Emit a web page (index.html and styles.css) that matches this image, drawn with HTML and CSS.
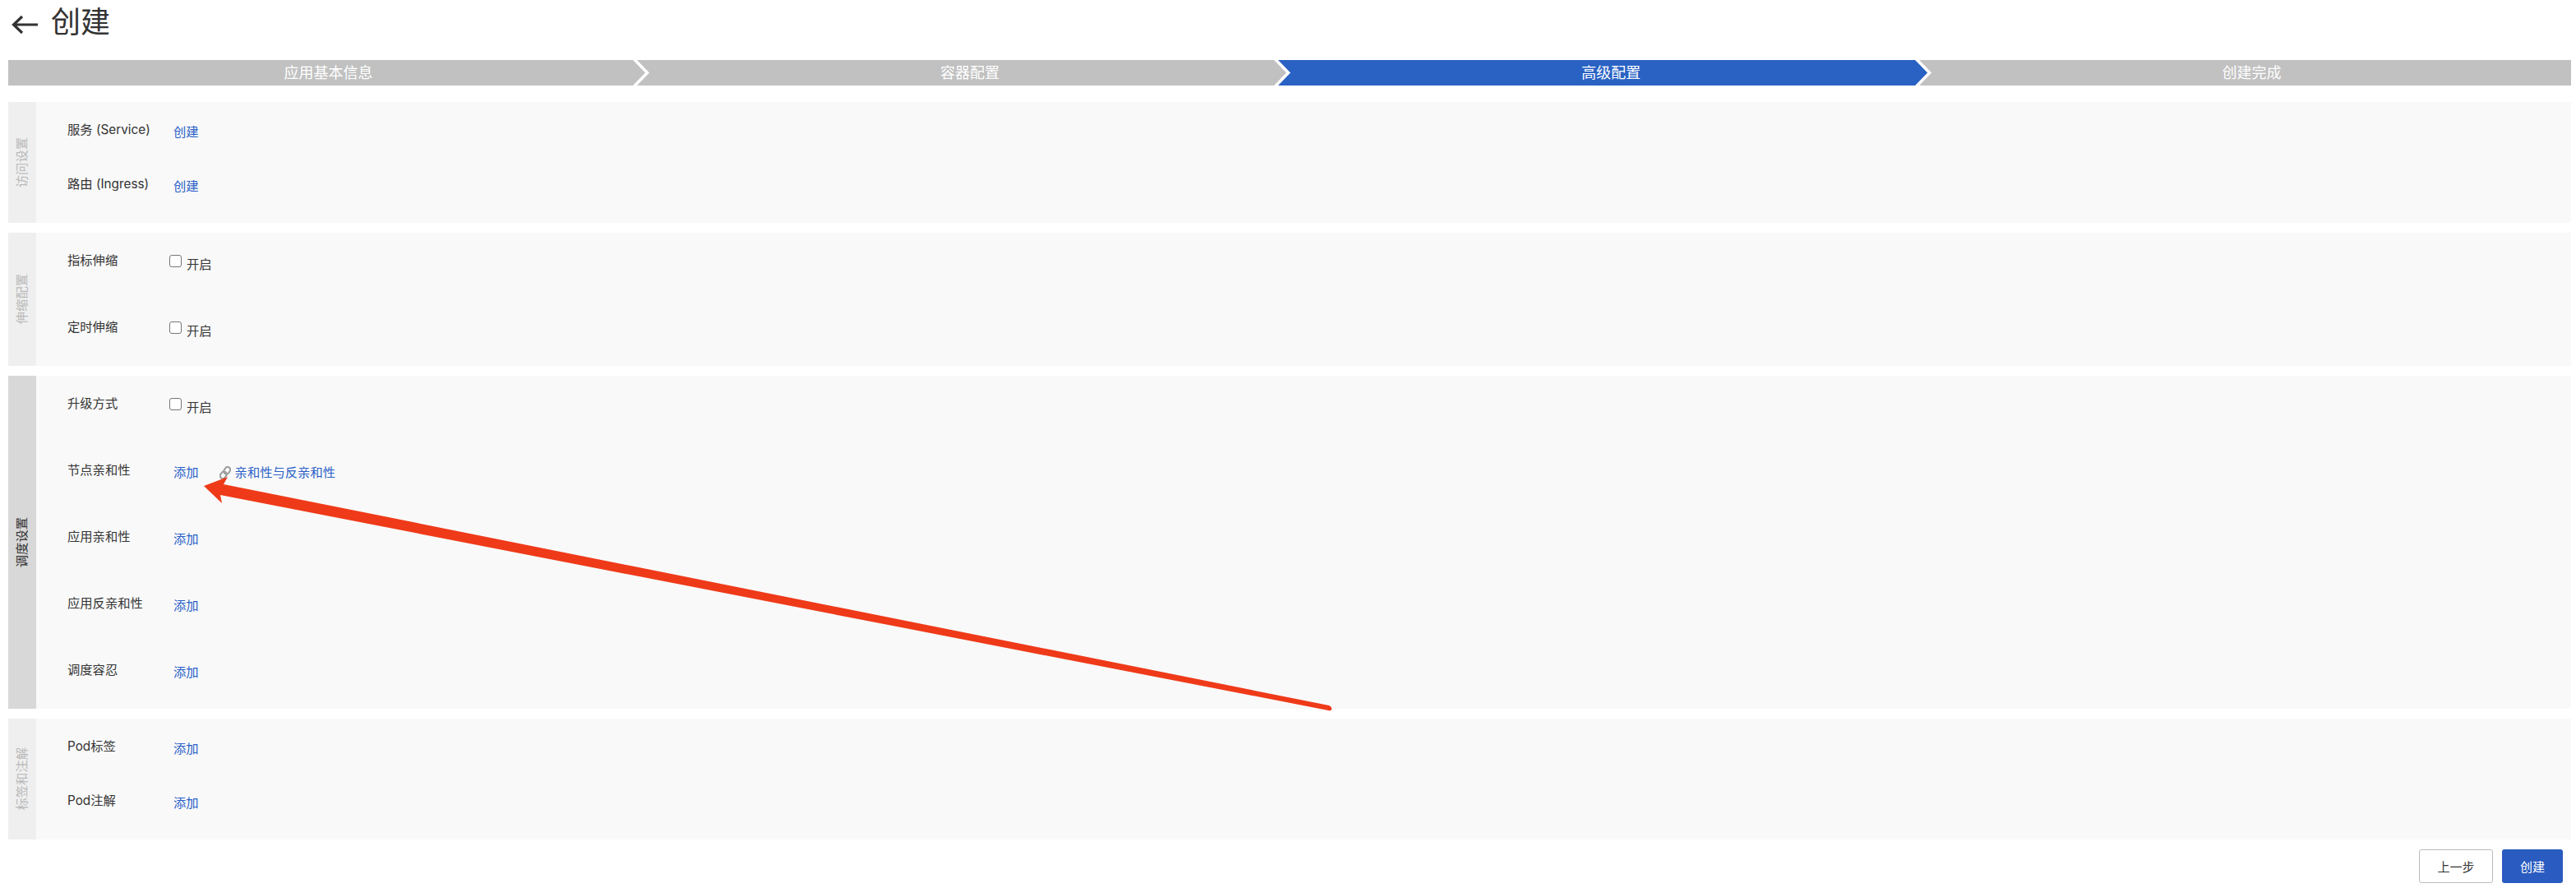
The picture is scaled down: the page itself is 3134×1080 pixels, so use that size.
FILE: index.html
```html
<!DOCTYPE html>
<html lang="zh-CN">
<head>
  <meta charset="UTF-8" />
  <title>创建</title>
  <link rel="stylesheet" href="styles.css">
</head>
<body>

<div class="page-head">
  <svg class="back-icon" viewBox="0 0 33 24" width="33" height="24">
    <path d="M32 12H3M13 2L2.500 12L13 22" fill="none" stroke="#333" stroke-width="3.200"/>
  </svg>
  <h1>创建</h1>
</div>

<div class="steps">
  <div class="step">应用基本信息</div>
  <div class="step">容器配置</div>
  <div class="step active">高级配置</div>
  <div class="step">创建完成</div>
</div>

<div class="section short">
  <div class="side"><span>访问设置</span></div>
  <div class="rows">
    <div class="row"><div class="label">服务 (Service)</div><a class="link">创建</a></div>
    <div class="row"><div class="label">路由 (Ingress)</div><a class="link">创建</a></div>
  </div>
</div>

<div class="section">
  <div class="side"><span>伸缩配置</span></div>
  <div class="rows">
    <div class="row">
      <div class="label">指标伸缩</div>
      <label class="check"><input type="checkbox"><span>开启</span></label>
    </div>
    <div class="row">
      <div class="label">定时伸缩</div>
      <label class="check"><input type="checkbox"><span>开启</span></label>
    </div>
  </div>
</div>

<div class="section">
  <div class="side current"><span>调度设置</span></div>
  <div class="rows">
    <div class="row">
      <div class="label">升级方式</div>
      <label class="check"><input type="checkbox"><span>开启</span></label>
    </div>
    <div class="row">
      <div class="label">节点亲和性</div>
      <a class="link">添加</a>
      <a class="link doc">
        <svg viewBox="0 0 14 16" width="14" height="16">
          <g fill="none" stroke="#9a9a9a" stroke-width="2" transform="rotate(35 7 8)">
            <rect x="4" y="0" width="6.500" height="9" rx="3.200"/>
            <rect x="3.500" y="7" width="6.500" height="9" rx="3.200"/>
          </g>
        </svg>
        亲和性与反亲和性
      </a>
    </div>
    <div class="row"><div class="label">应用亲和性</div><a class="link">添加</a></div>
    <div class="row"><div class="label">应用反亲和性</div><a class="link">添加</a></div>
    <div class="row"><div class="label">调度容忍</div><a class="link">添加</a></div>
  </div>
</div>

<div class="section short">
  <div class="side"><span>标签和注解</span></div>
  <div class="rows">
    <div class="row"><div class="label">Pod标签</div><a class="link">添加</a></div>
    <div class="row"><div class="label">Pod注解</div><a class="link">添加</a></div>
  </div>
</div>

<div class="footer">
  <button class="btn">上一步</button>
  <button class="btn primary">创建</button>
</div>

<!-- red annotation drawn over the page -->
<svg class="annotation" viewBox="0 0 3134 1080" width="3134" height="1080">
  <path d="M248 591L277 580L272 589L1617 858Q1621 860 1620 863Q1619 865 1616 864L268 602L270 612Z" fill="#ef3a19"/>
</svg>

</body>
</html>
```

FILE: styles.css
```css
html, body {
  height: 100%;
}
body {
  margin: 0;
  padding: 0 6px 0 10px;
  position: relative;
  overflow: hidden;
  background: #fff;
  color: #333;
  font-family: Inter, "Noto Sans CJK SC", sans-serif;
  font-size: 15.300px;
}
.page-head {
  display: flex;
  align-items: center;
  height: 54px;
  margin-bottom: 19px;
  padding-left: 4px;
}
.back-icon {
  margin-right: 15px;
  margin-top: 6px;
}
h1 {
  margin: 0;
  font-size: 36px;
  font-weight: 400;
  line-height: 54px;
  color: #333;
}
.steps {
  display: flex;
  height: 31px;
  margin-bottom: 20px;
}
.step {
  flex: 0 0 790px;
  margin-left: -10px;
  padding-left: 20px;
  box-sizing: border-box;
  background: #c1c1c1;
  color: #fff;
  font-size: 18px;
  line-height: 31px;
  text-align: center;
  clip-path: polygon(0 0, calc(100% - 15px) 0, 100% 50%, calc(100% - 15px) 100%, 0 100%, 15px 50%);
}
.step:first-child {
  flex-basis: 775px;
  margin-left: 0;
  padding-left: 4px;
  clip-path: polygon(0 0, calc(100% - 15px) 0, 100% 50%, calc(100% - 15px) 100%, 0 100%);
}
.step:last-child {
  flex: 1;
  padding-left: 16px;
  clip-path: polygon(0 0, 100% 0, 100% 100%, 0 100%, 15px 50%);
}
.step.active {
  background: #2a62c4;
}
.section {
  display: flex;
  margin-bottom: 12px;
  background: #f9f9f9;
}
.side {
  flex: 0 0 34px;
  display: flex;
  align-items: center;
  justify-content: center;
  background: #efefef;
  color: #b9b9b9;
}
.side span {
  writing-mode: vertical-rl;
  text-orientation: sideways;
  transform: rotate(180deg);
  line-height: 18px;
}
.side.current {
  background: #d8d8d8;
  color: #333;
}
.rows {
  display: flex;
  flex-direction: column;
  gap: 59px;
  padding: 23px 0 36px 38px;
}
.short .rows {
  gap: 44px;
}
.row {
  display: flex;
  height: 22px;
  line-height: 22px;
}
.label {
  flex: 0 0 129px;
  color: #333;
}
.link {
  margin-top: 3px;
  color: #2a5fc7;
}
.doc {
  display: flex;
  align-items: center;
  height: 22px;
  margin-left: 25px;
  gap: 5px;
}
.check {
  display: flex;
  margin: 0 0 0 -5px;
}
.check input {
  appearance: none;
  width: 15px;
  height: 15px;
  margin: 4px 6px 0 0;
  border: 1px solid #767676;
  border-radius: 3px;
  background: #fff;
}
.check span {
  margin-top: 5px;
}
.footer {
  display: flex;
  justify-content: flex-end;
  gap: 11px;
  padding-right: 10px;
}
.btn {
  height: 41px;
  width: 90px;
  border: 1px solid #bbb;
  border-radius: 3px;
  background: #fff;
  color: #333;
  font-family: inherit;
  font-size: 15px;
}
.btn.primary {
  width: 74px;
  border: none;
  background: #2a5bc0;
  color: #fff;
}
.annotation {
  position: absolute;
  left: 0;
  top: 0;
  pointer-events: none;
}
```
